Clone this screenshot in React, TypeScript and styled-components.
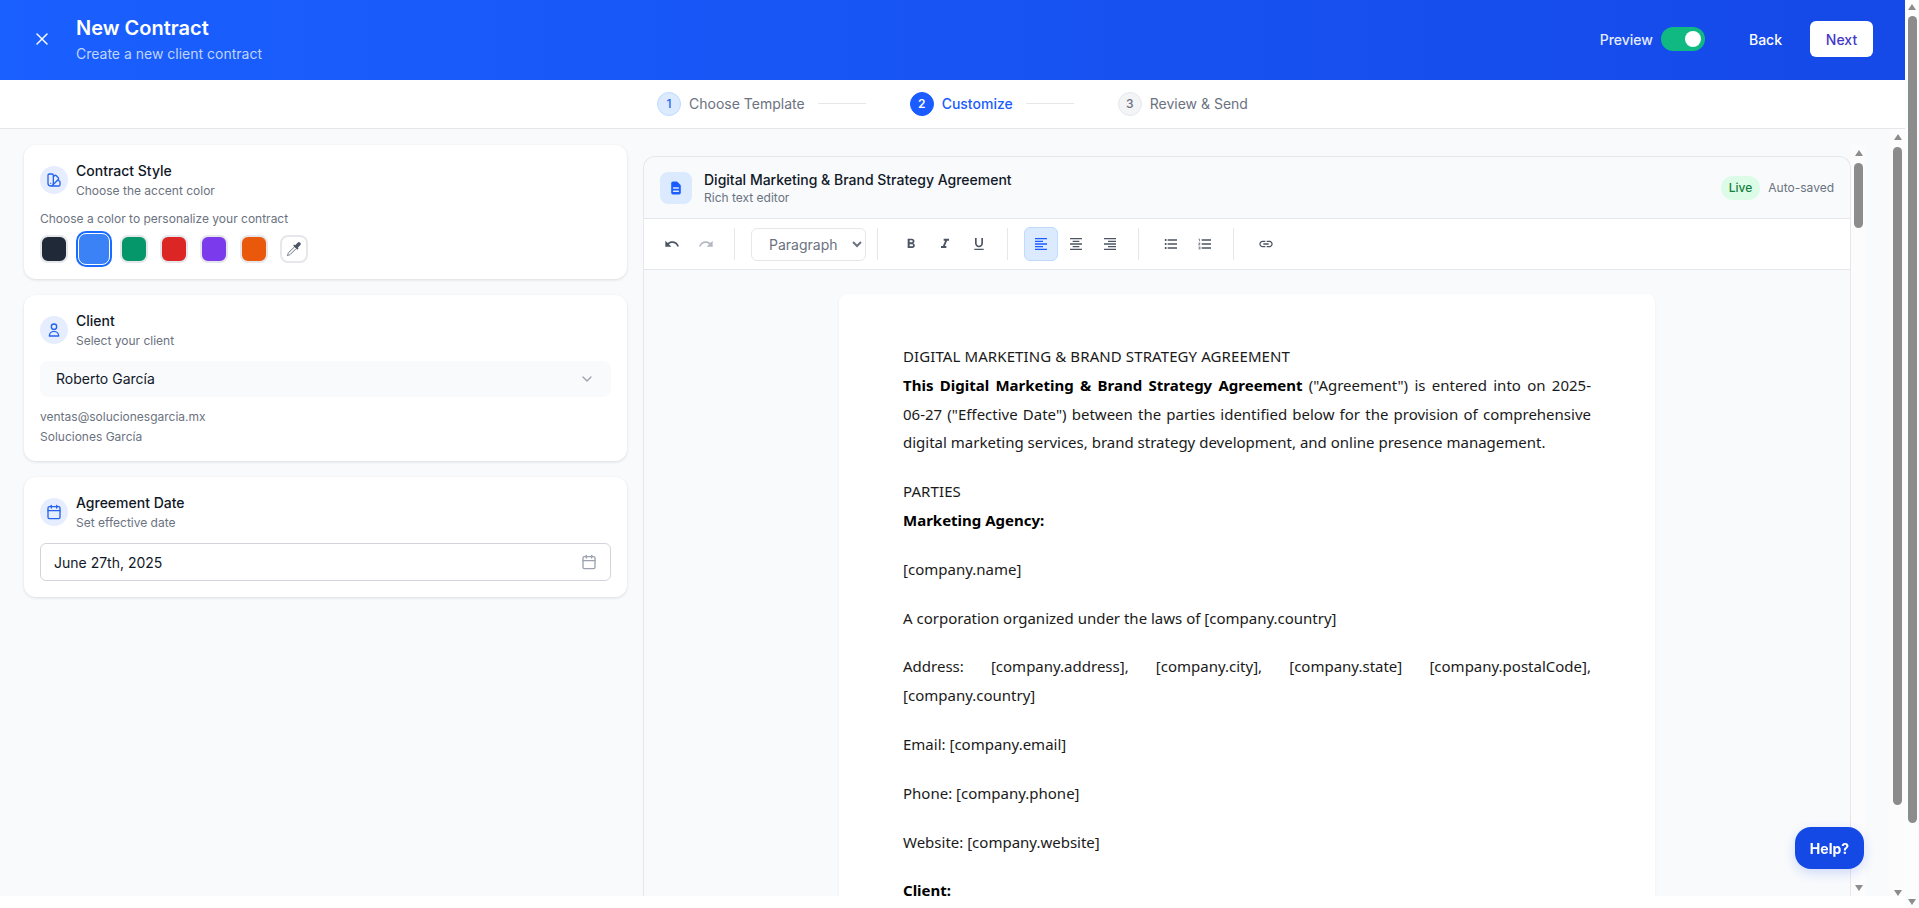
import React from "react";
import styled, { createGlobalStyle } from "styled-components";
import { X, ChevronDown, Calendar } from "lucide-react";
import { HiOutlineColorSwatch, HiOutlineUser, HiDocumentText } from "react-icons/hi";
import {
  MdUndo, MdRedo, MdFormatBold, MdFormatItalic, MdFormatUnderlined,
  MdFormatAlignLeft, MdFormatAlignCenter, MdFormatAlignRight,
  MdFormatListBulleted, MdFormatListNumbered, MdLink,
} from "react-icons/md";

const Global = createGlobalStyle`
  html, body { margin: 0; padding: 0; width: 100%; height: 100%; overflow: hidden; }
  body { font-family: Inter, "Noto Sans", sans-serif; color: #111827; background: #fff; }
  * { box-sizing: border-box; }
`;

const Root = styled.div`display: flex; width: 1919px; height: 908px; overflow: hidden; background: #fff;`;
const Page = styled.div`flex: 1; min-width: 0; display: flex; flex-direction: column; height: 100%;`;

const Header = styled.header`
  height: 80px; flex: none; display: flex; align-items: center; padding: 0 32px 2px 24px;
  background: linear-gradient(90deg, #1a5fff 0%, #1549e8 100%); color: #fff;
`;
const CloseBtn = styled.button`
  width: 36px; height: 36px; flex: none; margin-right: 16px; padding: 0; border: 0; background: transparent;
  color: #fff; display: flex; align-items: center; justify-content: center;
`;
const TitleBlock = styled.div`flex: 1;`;
const PageTitle = styled.div`font-size: 20px; line-height: 28px; font-weight: 600;`;
const PageSub = styled.div`font-size: 14px; line-height: 20px; margin-top: 2px; color: #bfd4ff;`;
const PreviewLabel = styled.span`font-size: 14px; font-weight: 500; color: #e4ecff; margin-right: 8px;`;
const Toggle = styled.div`
  width: 44px; height: 24px; border-radius: 12px; background: #10b981; display: flex; align-items: center;
  justify-content: flex-end; padding-right: 4px; margin-right: 28px;
`;
const Knob = styled.div`width: 16px; height: 16px; border-radius: 50%; background: #fff;`;
const BackBtn = styled.button`
  height: 36px; padding: 0 16px; margin-right: 12px; border: 0; background: transparent; color: #fff;
  font: 500 14px Inter, sans-serif;
`;
const NextBtn = styled.button`
  height: 36px; width: 63px; padding: 0; border: 0; border-radius: 6px; background: #fff; color: #4338ca;
  font: 500 14px Inter, sans-serif;
`;

const Stepper = styled.nav`
  height: 49px; flex: none; display: flex; align-items: center; justify-content: center; padding-bottom: 1px;
  background: #fff; border-bottom: 1px solid #e5e7eb;
`;
const Step = styled.div`display: flex; align-items: center;`;
const tones = {
  done: { bg: "#dbeafe", line: "#bfdbfe", fg: "#2563eb", weight: 500 },
  active: { bg: "#1a5cff", line: "#1a5cff", fg: "#fff", weight: 600 },
  todo: { bg: "#f3f4f6", line: "#e5e7eb", fg: "#6b7280", weight: 500 },
};
type Tone = keyof typeof tones;
const StepDot = styled.div<{ $tone: Tone }>`
  width: 24px; height: 24px; border-radius: 50%; display: flex; align-items: center; justify-content: center;
  font-size: 12px; font-weight: ${(p) => tones[p.$tone].weight};
  background: ${(p) => tones[p.$tone].bg}; color: ${(p) => tones[p.$tone].fg};
  border: 1px solid ${(p) => tones[p.$tone].line};
`;
const StepLabel = styled.span<{ $active?: boolean }>`
  margin-left: 8px; font-size: 14px; font-weight: ${(p) => (p.$active ? 500 : 400)};
  color: ${(p) => (p.$active ? "#1a5cff" : "#6b7280")};
`;
const StepLine = styled.div`width: 48px; height: 1px; background: #e5e7eb; margin: 0 44px 0 13px;`;

const Main = styled.main`flex: 1; min-height: 0; display: flex; background: #f8fafc; overflow: hidden;`;
const MainBody = styled.div`
  flex: 1; min-width: 0; display: flex; padding: 16px 24px 0; gap: 16px; overflow: hidden;
`;
const BottomStrip = styled.div`height: 12px; flex: none; background: #fff;`;

const LeftCol = styled.aside`width: 603px; flex: none; display: flex; flex-direction: column; gap: 16px;`;
const Card = styled.section`
  background: #fff; border-radius: 12px; padding: 16px; box-shadow: 0 1px 3px rgba(0, 0, 0, 0.12);
`;
const CardHead = styled.div`display: flex; align-items: center; gap: 8px; margin-bottom: 12px;`;
const IconCircle = styled.div`
  width: 28px; height: 28px; border-radius: 50%; flex: none; background: #e6edff; color: #2563eb;
  display: flex; align-items: center; justify-content: center;
`;
const CardTitle = styled.div`font-size: 14px; line-height: 20px; font-weight: 500; color: #111827;`;
const CardSub = styled.div`font-size: 12px; line-height: 16px; margin-top: 2px; color: #6b7280;`;
const Hint = styled.div`font-size: 12px; line-height: 16px; color: #6b7280; margin-bottom: 8px;`;
const SwatchRow = styled.div`display: flex; gap: 12px; align-items: center;`;
const Swatch = styled.div<{ $color: string; $selected?: boolean }>`
  background: ${(p) => p.$color}; border-radius: 8px;
  width: ${(p) => (p.$selected ? "32px" : "28px")}; height: ${(p) => (p.$selected ? "32px" : "28px")};
  margin: ${(p) => (p.$selected ? "-2px" : "0")};
  border: ${(p) => (p.$selected ? "1px solid #fff" : "2px solid #e5e7eb")};
  box-shadow: ${(p) => (p.$selected ? "0 0 0 2px #1a6bff" : "none")};
`;
const PickerBtn = styled.div`
  width: 28px; height: 28px; border-radius: 8px; border: 2px solid #e5e7eb; background: #fff;
  display: flex; align-items: center; justify-content: center; color: #6b7280;
`;
const ClientSelect = styled.div`
  height: 36px; border-radius: 8px; background: #f8fafc; padding: 0 16px 1px; display: flex; align-items: center;
  justify-content: space-between; font-size: 14px; color: #111827;
`;
const MutedIcon = styled.span`display: flex; color: #9ca3af;`;
const Meta = styled.div`margin: 10px 0 -2px; font-size: 12px; line-height: 20px; color: #6b7280;`;
const DateField = styled.div`
  height: 38px; border-radius: 6px; border: 1px solid #d1d5db; background: #fff; padding: 0 13px;
  display: flex; align-items: center; justify-content: space-between; font-size: 14px; color: #111827;
`;

const RightCol = styled.div`flex: 1; min-width: 0; display: flex;`;
const EditorWrap = styled.div`flex: 1; min-width: 0; padding-top: 11px;`;
const EditorCard = styled.section`
  height: 900px; border: 1px solid #e5e7eb; border-bottom: 0; border-radius: 12px 12px 0 0; background: #f8fafc;
  display: flex; flex-direction: column;
`;
const EditorHead = styled.div`
  height: 62px; flex: none; display: flex; align-items: center; gap: 12px; padding: 0 16px;
  border-bottom: 1px solid #e5e7eb; background: #f8fafc; border-radius: 12px 12px 0 0;
`;
const DocIcon = styled.div`
  width: 32px; height: 32px; flex: none; border-radius: 8px; background: #dbeafe; color: #1a5cff;
  display: flex; align-items: center; justify-content: center;
`;
const EditorTitleBlock = styled.div`flex: 1;`;
const EditorTitle = styled.div`font-size: 14px; line-height: 20px; font-weight: 500; color: #111827;`;
const EditorSub = styled.div`font-size: 12px; line-height: 16px; color: #6b7280;`;
const LiveBadge = styled.span`
  height: 24px; padding: 0 8px; border-radius: 12px; background: #dcfce7; color: #15803d;
  font-size: 12px; font-weight: 500; display: flex; align-items: center;
`;
const SavedText = styled.span`font-size: 12px; color: #6b7280; margin-left: -4px;`;
const Toolbar = styled.div`
  height: 51px; flex: none; display: flex; align-items: center; padding: 0 11px; background: #fff;
  border-bottom: 1px solid #e5e7eb;
`;
const ToolGroup = styled.div<{ $gap?: number; $after?: number }>`
  display: flex; align-items: center; height: 32px; padding-right: 11px;
  gap: ${(p) => p.$gap ?? 0}px; margin-right: ${(p) => p.$after ?? 16}px;
  border-right: 1px solid #e5e7eb;
  &:last-child { border-right: 0; margin-right: 0; }
`;
const ToolBtn = styled.button<{ $active?: boolean; $dim?: boolean }>`
  width: 34px; height: 34px; padding: 0; display: flex; align-items: center; justify-content: center;
  border-radius: 6px; border: 1px solid ${(p) => (p.$active ? "#bfdbfe" : "transparent")};
  background: ${(p) => (p.$active ? "#dbeafe" : "transparent")};
  color: ${(p) => (p.$active ? "#1a5cff" : p.$dim ? "#b3b8c2" : "#4b5563")};
`;
const BlockSelect = styled.select`
  width: 115px; height: 33px; padding: 0 2px 0 13px; border: 1px solid #e5e7eb; border-radius: 6px; background: #fff;
  color: #6b7280; font: 14px Inter, sans-serif; outline: none;
`;

const EditorArea = styled.div`flex: 1; padding: 24px 16px 0; display: flex; justify-content: center; overflow: hidden;`;
const Paper = styled.article`
  width: 816px; flex: none; height: 700px; background: #fff; border-radius: 8px; padding: 48px 64px;
  box-shadow: 0 1px 3px rgba(0, 0, 0, 0.06);
  font-family: "Noto Sans", sans-serif; font-size: 15px; line-height: 28.8px; color: #1a1a1a; text-align: justify;
`;
const DocHeading = styled.div`margin: 0; letter-spacing: 0.1px;`;
const DocPara = styled.p`margin: 0 0 20px;`;
const Strong = styled.strong`font-weight: 700; color: #000;`;
const NoBreak = styled.span`white-space: nowrap;`;

const Rail = styled.div<{ $width: number; $top: number; $bottom: number; $bg: string }>`
  width: ${(p) => p.$width}px; flex: none; display: flex; flex-direction: column; align-items: center;
  padding: ${(p) => p.$top}px 0 ${(p) => p.$bottom}px; background: ${(p) => p.$bg};
`;
const ArrowUp = styled.div`
  width: 0; height: 0; flex: none; border-left: 4.5px solid transparent; border-right: 4.5px solid transparent;
  border-bottom: 6px solid #8c8c8c;
`;
const ArrowDown = styled.div`
  width: 0; height: 0; flex: none; margin-top: auto; border-left: 4.5px solid transparent; border-right: 4.5px solid transparent;
  border-top: 6px solid #8c8c8c;
`;
const Thumb = styled.div<{ $gap: number; $height: number }>`
  width: 9px; flex: none; height: ${(p) => p.$height}px; margin-top: ${(p) => p.$gap}px; border-radius: 5px; background: #8c8c8c;
`;

const HelpBtn = styled.button`
  position: fixed; left: 1795px; top: 827px; width: 69px; height: 42px; border: 0; border-radius: 16px;
  background: #1549e6; color: #fff; font: 700 14px Inter, sans-serif; padding: 0;
  box-shadow: 0 4px 12px rgba(21, 73, 230, 0.18);
`;

const Eyedropper = () => (
  <svg width="16" height="16" viewBox="0 0 16 16" fill="none">
    <path d="M9.2 4.2 11.9 1.6a1.5 1.5 0 0 1 2.1 0l.4.4a1.5 1.5 0 0 1 0 2.1l-2.6 2.7.7.8-1.2 1.2-4.1-4.1 1.2-1.2z" fill="#4b5563" />
    <path d="M8.1 6.2 2.6 11.700c-.5.5-.6 1-.7 1.600l-.5 1.300 1.300-.5c.6-.1 1.100-.2 1.600-.7l5.500-5.500" stroke="#6b7280" strokeWidth="1" />
  </svg>
);

const swatches = ["#1f2937", "#3b82f6", "#059669", "#dc2626", "#7c3aed", "#ea580c"];

export default function App() {
  return (
    <Root>
      <Global />
      <Page>
        <Header>
          <CloseBtn aria-label="Close"><X size={20} strokeWidth={1.75} /></CloseBtn>
          <TitleBlock>
            <PageTitle>New Contract</PageTitle>
            <PageSub>Create a new client contract</PageSub>
          </TitleBlock>
          <PreviewLabel>Preview</PreviewLabel>
          <Toggle><Knob /></Toggle>
          <BackBtn>Back</BackBtn>
          <NextBtn>Next</NextBtn>
        </Header>
        <Stepper>
          <Step>
            <StepDot $tone="done">1</StepDot>
            <StepLabel>Choose Template</StepLabel>
            <StepLine />
          </Step>
          <Step>
            <StepDot $tone="active">2</StepDot>
            <StepLabel $active>Customize</StepLabel>
            <StepLine />
          </Step>
          <Step>
            <StepDot $tone="todo">3</StepDot>
            <StepLabel>Review &amp; Send</StepLabel>
          </Step>
        </Stepper>
        <Main>
          <MainBody>
            <LeftCol>
              <Card>
                <CardHead>
                  <IconCircle><HiOutlineColorSwatch size={16} /></IconCircle>
                  <div>
                    <CardTitle>Contract Style</CardTitle>
                    <CardSub>Choose the accent color</CardSub>
                  </div>
                </CardHead>
                <Hint>Choose a color to personalize your contract</Hint>
                <SwatchRow>
                  {swatches.map((c, i) => <Swatch key={c} $color={c} $selected={i === 1} />)}
                  <PickerBtn><Eyedropper /></PickerBtn>
                </SwatchRow>
              </Card>
              <Card>
                <CardHead>
                  <IconCircle><HiOutlineUser size={16} /></IconCircle>
                  <div>
                    <CardTitle>Client</CardTitle>
                    <CardSub>Select your client</CardSub>
                  </div>
                </CardHead>
                <ClientSelect>
                  Roberto García
                  <MutedIcon><ChevronDown size={16} /></MutedIcon>
                </ClientSelect>
                <Meta>
                  <div>ventas@solucionesgarcia.mx</div>
                  <div>Soluciones García</div>
                </Meta>
              </Card>
              <Card>
                <CardHead>
                  <IconCircle><Calendar size={16} /></IconCircle>
                  <div>
                    <CardTitle>Agreement Date</CardTitle>
                    <CardSub>Set effective date</CardSub>
                  </div>
                </CardHead>
                <DateField>
                  June 27th, 2025
                  <MutedIcon><Calendar size={16} /></MutedIcon>
                </DateField>
              </Card>
            </LeftCol>
            <RightCol>
              <EditorWrap>
                <EditorCard>
                  <EditorHead>
                    <DocIcon><HiDocumentText size={16} /></DocIcon>
                    <EditorTitleBlock>
                      <EditorTitle>Digital Marketing &amp; Brand Strategy Agreement</EditorTitle>
                      <EditorSub>Rich text editor</EditorSub>
                    </EditorTitleBlock>
                    <LiveBadge>Live</LiveBadge>
                    <SavedText>Auto-saved</SavedText>
                  </EditorHead>
                  <Toolbar>
                    <ToolGroup>
                      <ToolBtn><MdUndo size={16} /></ToolBtn>
                      <ToolBtn $dim><MdRedo size={16} /></ToolBtn>
                    </ToolGroup>
                    <ToolGroup>
                      <BlockSelect defaultValue="Paragraph"><option>Paragraph</option></BlockSelect>
                    </ToolGroup>
                    <ToolGroup>
                      <ToolBtn><MdFormatBold size={16} /></ToolBtn>
                      <ToolBtn><MdFormatItalic size={16} /></ToolBtn>
                      <ToolBtn><MdFormatUnderlined size={16} /></ToolBtn>
                    </ToolGroup>
                    <ToolGroup $gap={0.5} $after={15}>
                      <ToolBtn $active><MdFormatAlignLeft size={16} /></ToolBtn>
                      <ToolBtn><MdFormatAlignCenter size={16} /></ToolBtn>
                      <ToolBtn><MdFormatAlignRight size={16} /></ToolBtn>
                    </ToolGroup>
                    <ToolGroup $after={15}>
                      <ToolBtn><MdFormatListBulleted size={16} /></ToolBtn>
                      <ToolBtn><MdFormatListNumbered size={16} /></ToolBtn>
                    </ToolGroup>
                    <ToolGroup>
                      <ToolBtn><MdLink size={16} /></ToolBtn>
                    </ToolGroup>
                  </Toolbar>
                  <EditorArea>
                    <Paper>
                      <DocHeading>DIGITAL MARKETING &amp; BRAND STRATEGY AGREEMENT</DocHeading>
                      <DocPara>
                        <Strong>This Digital Marketing &amp; Brand Strategy Agreement</Strong> ("Agreement") is entered into on 2025-<NoBreak>06-27</NoBreak> ("Effective Date") between the parties identified below for the provision of comprehensive digital marketing services, brand strategy development, and online presence management.
                      </DocPara>
                      <DocHeading>PARTIES</DocHeading>
                      <DocPara><Strong>Marketing Agency:</Strong></DocPara>
                      <DocPara>[company.name]</DocPara>
                      <DocPara>A corporation organized under the laws of [company.country]</DocPara>
                      <DocPara>Address: [company.address], [company.city], [company.state] [company.postalCode], [company.country]</DocPara>
                      <DocPara>Email: [company.email]</DocPara>
                      <DocPara>Phone: [company.phone]</DocPara>
                      <DocPara>Website: [company.website]</DocPara>
                      <DocPara><Strong>Client:</Strong></DocPara>
                    </Paper>
                  </EditorArea>
                </EditorCard>
              </EditorWrap>
              <Rail $width={15} $top={5} $bottom={5} $bg="#fcfcfd">
                <ArrowUp />
                <Thumb $gap={7} $height={65} />
                <ArrowDown />
              </Rail>
            </RightCol>
          </MainBody>
          <Rail $width={15} $top={5} $bottom={0} $bg="#fcfcfd">
            <ArrowUp />
            <Thumb $gap={7} $height={658} />
            <ArrowDown />
          </Rail>
        </Main>
        <BottomStrip />
      </Page>
      <Rail $width={14} $top={4} $bottom={3} $bg="#fdfdfd">
        <ArrowUp />
        <Thumb $gap={6} $height={807} />
        <ArrowDown />
      </Rail>
      <HelpBtn>Help?</HelpBtn>
    </Root>
  );
}
